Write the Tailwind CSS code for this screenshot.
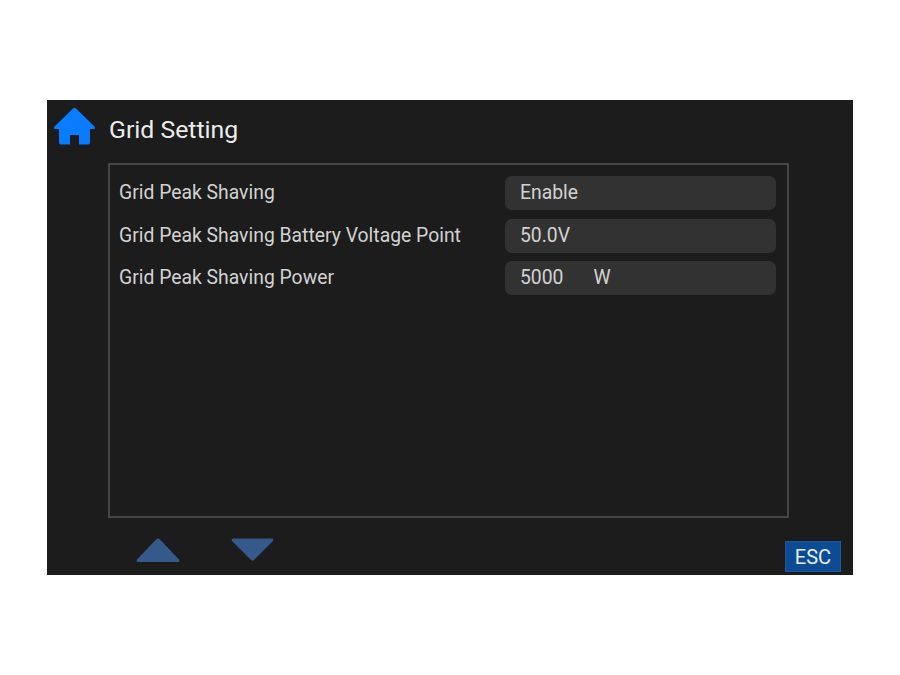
<!DOCTYPE html>
<html lang="en">
<head>
    <meta charset="UTF-8">
    <title>Grid Setting</title>
    <script src="https://cdn.jsdelivr.net/npm/@tailwindcss/browser@4"></script>
</head>
<body class="bg-white font-['Roboto',sans-serif]">
    <div class="w-[900px] h-[675px] pt-[100px] pl-[47px]">
        <div class="relative w-[806px] h-[475px] bg-[#1c1c1c] flex flex-col">
            <!-- Header -->
            <div class="h-[63px] flex items-center">
                <svg class="ml-[6px] mt-[-12px]" width="43" height="38" viewBox="0 0 43 38">
                    <path d="M20 1.5 Q21.5 0.2 23 1.5 L41.5 19.5 Q43 22 40.5 22 L37 22 L37 35.5 Q37 37.5 35 37.5 L26 37.5 L26 28 L17 28 L17 37.5 L8 37.5 Q6 37.5 6 35.5 L6 22 L2.500 22 Q0 22 1.500 19.500 Z" fill="#0a7cff"/>
                </svg>
                <h1 class="ml-[13px] mt-[-3px] text-[24.8px] text-[#ececec] leading-none">Grid Setting</h1>
            </div>

            <!-- Settings panel -->
            <div class="ml-[61px] w-[681px] h-[355px] border-2 border-[#464646] pt-[11px] pl-[9px] pr-[11px] flex flex-col text-[#d2d2d2] text-[19.35px]">
                <div class="flex items-center justify-between h-[34px] mb-[9px]">
                    <span>Grid Peak Shaving</span>
                    <div class="w-[271px] h-[34px] rounded-[7px] bg-[#323232] pl-[15px] flex items-center">Enable</div>
                </div>
                <div class="flex items-center justify-between h-[34px] mb-[8px]">
                    <span>Grid Peak Shaving Battery Voltage Point</span>
                    <div class="w-[271px] h-[34px] rounded-[7px] bg-[#323232] pl-[15px] flex items-center">50.0V</div>
                </div>
                <div class="flex items-center justify-between h-[34px]">
                    <span>Grid Peak Shaving Power</span>
                    <div class="w-[271px] h-[34px] rounded-[7px] bg-[#323232] pl-[15px] flex items-center gap-[30px]"><span>5000</span><span>W</span></div>
                </div>
            </div>

            <!-- Footer -->
            <div class="flex-1 flex items-start pl-[89px] pt-[20px] gap-[51px]">
                <svg width="44" height="25" viewBox="0 0 44 25">
                    <path d="M20.500 1 Q22 0 23.500 1 L43 21.500 Q44 24 42 24 L2 24 Q0 24 1 21.500 Z" fill="#34598a"/>
                </svg>
                <svg width="44" height="25" viewBox="0 0 44 25">
                    <path d="M2 0.500 L41 0.500 Q43 1 42 3 L23 22 Q21.500 23.500 20 22 L1 3 Q0 1 2 0.500 Z" fill="#34598a"/>
                </svg>
            </div>
            <button class="absolute left-[738px] top-[441px] w-[56px] h-[31px] bg-[#0d4c94] border border-[#1a5aa3] text-[20px] text-[#e6eef7] flex items-center justify-center">ESC</button>
        </div>
    </div>
</body>
</html>
